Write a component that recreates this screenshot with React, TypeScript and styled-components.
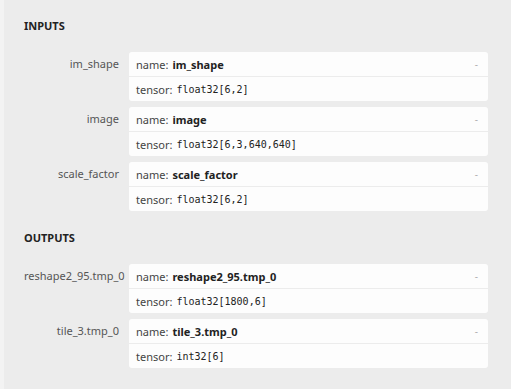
import React from 'react';
import styled, { createGlobalStyle } from 'styled-components';

const GlobalStyle = createGlobalStyle`
  html, body {
    margin: 0;
    padding: 0;
    background: #ececec;
  }
  body {
    font-family: "Noto Sans", "Open Sans", sans-serif;
  }
`;

interface IPort {
  label: string;
  name: string;
  tensor: string;
}

const inputs: IPort[] = [
  { label: 'im_shape', name: 'im_shape', tensor: 'float32[6,2]' },
  { label: 'image', name: 'image', tensor: 'float32[6,3,640,640]' },
  { label: 'scale_factor', name: 'scale_factor', tensor: 'float32[6,2]' },
];

const outputs: IPort[] = [
  { label: 'reshape2_95.tmp_0', name: 'reshape2_95.tmp_0', tensor: 'float32[1800,6]' },
  { label: 'tile_3.tmp_0', name: 'tile_3.tmp_0', tensor: 'int32[6]' },
];

const Page = styled.div`
  min-height: 389px;
  box-sizing: border-box;
  border-left: 4px solid #f3f3f3;
  padding: 18px 23px 0 20px;
`;

const Section = styled.section`
  display: flex;
  flex-direction: column;
  gap: 6px;
  margin-bottom: 19px;
`;

const SectionTitle = styled.h2`
  margin: 0 0 19px;
  font-size: 11px;
  line-height: 15px;
  font-weight: 700;
  color: #222;
`;

const Row = styled.div`
  display: grid;
  grid-template-columns: 95px 1fr;
  column-gap: 10px;
`;

const Label = styled.div`
  text-align: right;
  font-size: 11px;
  line-height: 24px;
  color: #555;
  white-space: nowrap;
`;

const Card = styled.div`
  background: #fdfdfd;
  border-radius: 3px;
  display: flex;
  flex-direction: column;
`;

const Line = styled.div<{ $divided?: boolean }>`
  display: flex;
  align-items: center;
  height: 24px;
  padding: 0 10px 0 7px;
  font-size: 11px;
  color: #444;
  border-top: ${({ $divided }) => ($divided ? '1px solid #ececec' : 'none')};
`;

const Value = styled.b`
  margin-left: 4px;
  font-weight: 700;
  color: #222;
`;

const Mono = styled.span`
  margin-left: 4px;
  font-family: "DejaVu Sans Mono", "Liberation Mono", monospace;
  font-size: 10px;
  color: #222;
`;

const Toggle = styled.span`
  margin-left: auto;
  color: #b0b0b0;
  font-size: 10px;
`;

const Port: React.FC<IPort> = ({ label, name, tensor }) => (
  <Row>
    <Label>{label}</Label>
    <Card>
      <Line>
        name:<Value>{name}</Value>
        <Toggle>-</Toggle>
      </Line>
      <Line $divided>
        tensor:<Mono>{tensor}</Mono>
      </Line>
    </Card>
  </Row>
);

export default function App() {
  return (
    <>
      <GlobalStyle />
      <Page>
        <SectionTitle>INPUTS</SectionTitle>
        <Section>
          {inputs.map((p) => (
            <Port key={p.label} {...p} />
          ))}
        </Section>
        <SectionTitle>OUTPUTS</SectionTitle>
        <Section>
          {outputs.map((p) => (
            <Port key={p.label} {...p} />
          ))}
        </Section>
      </Page>
    </>
  );
}
